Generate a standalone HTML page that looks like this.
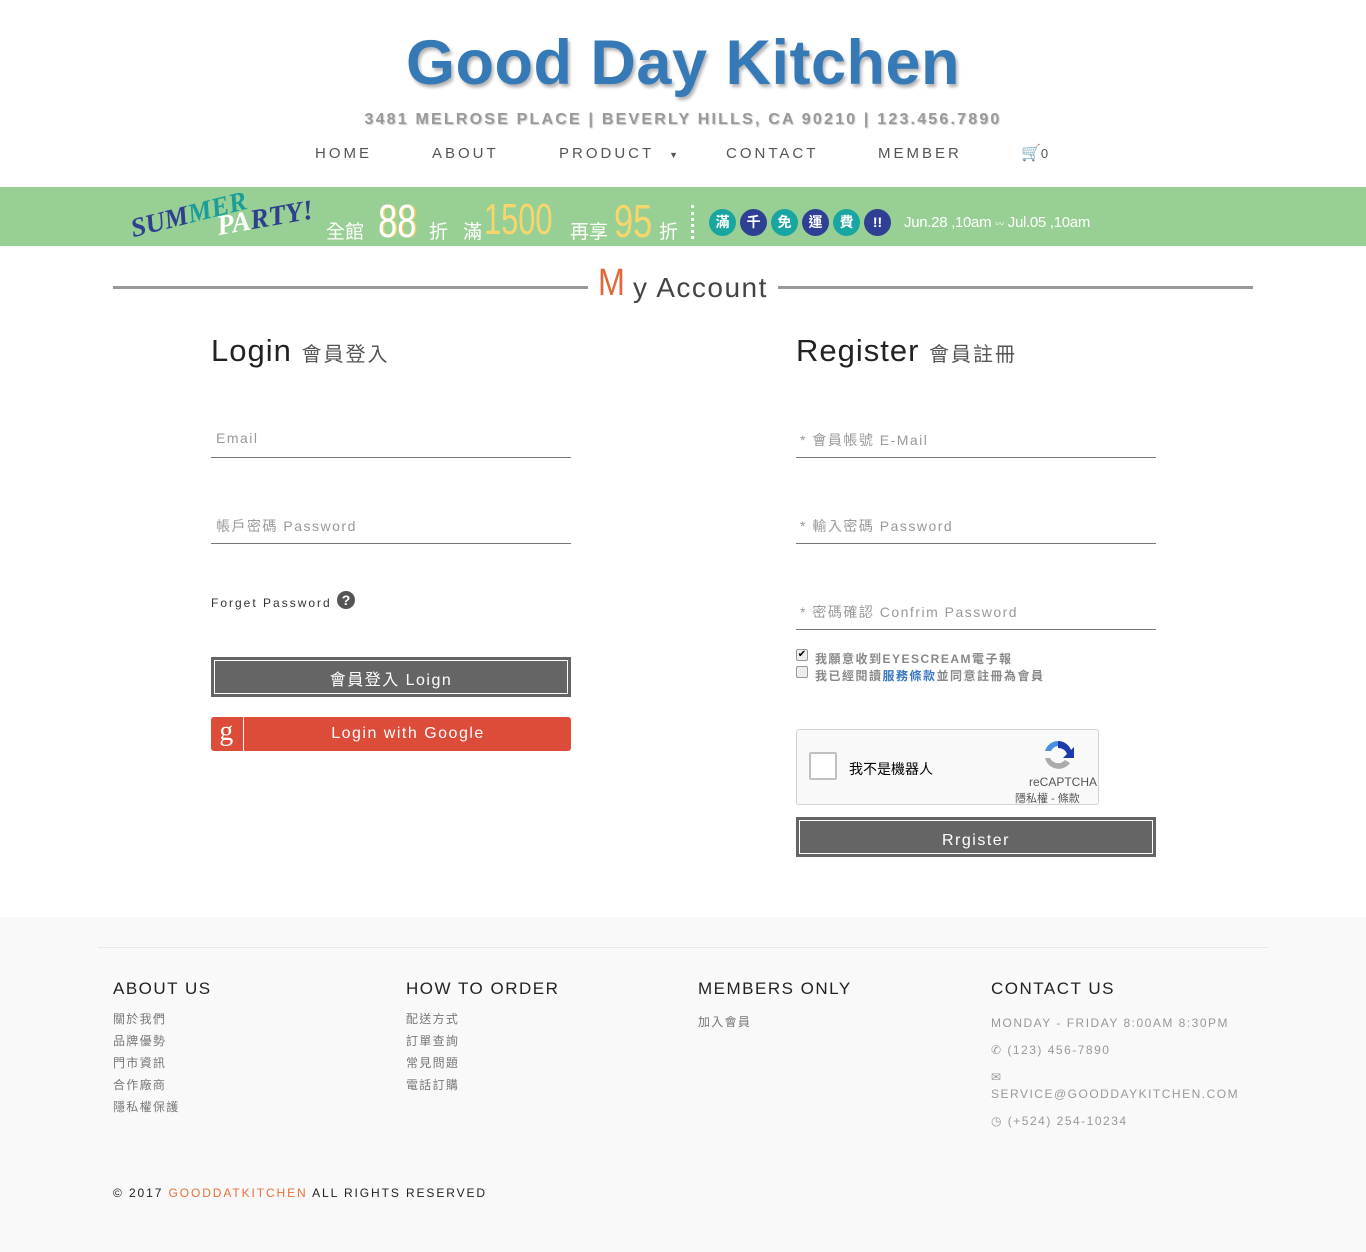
<!DOCTYPE html>
<html><head><meta charset="utf-8"><style>
*{margin:0;padding:0;box-sizing:border-box}
body{width:1366px;height:1252px;position:relative;background:#fff;font-family:"Liberation Sans","Noto Sans CJK TC",sans-serif;overflow:hidden}
.a{position:absolute;white-space:nowrap}
.title{left:0;width:1366px;top:27px;text-align:center;font-size:63px;font-weight:bold;letter-spacing:0.5px;color:#3579b6;text-shadow:2px 3px 3px rgba(0,0,0,.3)}
.addr{left:0;width:1366px;top:111px;text-align:center;font-size:16px;font-weight:bold;letter-spacing:2.2px;color:#999;text-shadow:1px 1px 1px rgba(0,0,0,.2)}
.nav{top:145px;font-size:15px;letter-spacing:3px;color:#555}
.banner{left:0;top:187px;width:1366px;height:59px;background:#98cf94;overflow:hidden}
.circ{display:inline-block;width:27px;height:27px;border-radius:50%;color:#fff;font-size:14px;font-weight:bold;text-align:center;line-height:27px;margin-right:4px}
.hr{height:3px;background:#999;top:286px}
.h2{font-size:31px;color:#222;letter-spacing:1px}
.h2 span{font-size:20px;color:#555;letter-spacing:2px}
.field{height:1px;background:#777;width:360px}
.ph{font-size:14px;color:#999;letter-spacing:1.5px}
.btn{background:#656565;color:#fff;width:360px;height:40px;border:3px solid #656565;text-align:center;font-size:16px;letter-spacing:1.5px}
.btn div{border:1px solid #fff;height:100%;line-height:40px}
.fh{font-size:17px;letter-spacing:1.5px;color:#222;top:979px}
.fl{font-size:12px;color:#777;letter-spacing:1.3px}
.fc{font-size:12px;color:#999;letter-spacing:1.5px}
.num{transform:scaleX(.75);transform-origin:left}
</style></head><body>
<div class="a title">Good Day Kitchen</div>
<div class="a addr">3481 MELROSE PLACE | BEVERLY HILLS, CA 90210 | 123.456.7890</div>
<div class="a nav" style="left:315px">HOME</div>
<div class="a nav" style="left:432px">ABOUT</div>
<div class="a nav" style="left:559px">PRODUCT <span style="font-size:9px;margin-left:8px">▼</span></div>
<div class="a nav" style="left:726px">CONTACT</div>
<div class="a nav" style="left:878px">MEMBER</div>
<div class="a" style="left:1021px;top:143px;font-size:16px;color:#555">&#128722;<span style="font-size:13px">0</span></div>

<div class="a banner">
 <div class="a" style="left:135px;top:26px;font-family:'Liberation Serif',serif;font-style:italic;font-weight:bold;font-size:27px;color:#2f3f8f;transform:rotate(-14deg);transform-origin:left bottom">SUM<span style="color:#1a9e9a">MER</span></div>
 <div class="a" style="left:220px;top:24px;font-family:'Liberation Serif',serif;font-style:italic;font-weight:bold;font-size:28px;color:#fff;transform:rotate(-10deg);transform-origin:left bottom">PA<span style="color:#2f3f8f">RTY!</span></div>
 <div class="a" style="left:326px;top:30px;font-size:19px;color:#fff">全館</div>
 <div class="a num" style="left:378px;top:7px;font-size:46px;color:#fff;text-shadow:2px 0 #f5cd60">88</div>
 <div class="a" style="left:429px;top:30px;font-size:19px;color:#fff">折</div>
 <div class="a" style="left:463px;top:30px;font-size:19px;color:#fff">滿</div>
 <div class="a num" style="left:484px;top:8px;font-size:44px;color:#f9d66c;transform:scaleX(.7)">1500</div>
 <div class="a" style="left:570px;top:30px;font-size:19px;color:#fff">再享</div>
 <div class="a num" style="left:614px;top:7px;font-size:46px;color:#f9d66c">95</div>
 <div class="a" style="left:659px;top:30px;font-size:19px;color:#fff">折</div>
 <div class="a" style="left:691px;top:18px;height:34px;border-left:3px dotted #fff"></div>
 <div class="a" style="left:709px;top:22px">
  <span class="circ" style="background:#1aa6a0">滿</span><span class="circ" style="background:#2f3f94">千</span><span class="circ" style="background:#1aa6a0">免</span><span class="circ" style="background:#2f3f94">運</span><span class="circ" style="background:#1aa6a0">費</span><span class="circ" style="background:#2f3f94">!!</span>
 </div>
 <div class="a" style="left:904px;top:27px;font-size:15px;color:#fff;letter-spacing:-.3px">Jun.28 ,10am <span style="font-size:9px">〰</span> Jul.05 ,10am</div>
</div>

<div class="a hr" style="left:113px;width:475px"></div>
<div class="a hr" style="left:778px;width:475px"></div>
<div class="a" style="left:598px;top:262px;font-size:38px;color:#e0683a;font-weight:normal;transform:scaleX(.85);transform-origin:left">M</div>
<div class="a" style="left:633px;top:272px;font-size:28px;color:#444;letter-spacing:1.5px">y Account</div>

<div class="a h2" style="left:211px;top:333px">Login <span>會員登入</span></div>
<div class="a h2" style="left:796px;top:333px">Register <span>會員註冊</span></div>

<div class="a ph" style="left:216px;top:430px">Email</div>
<div class="a field" style="left:211px;top:457px"></div>
<div class="a ph" style="left:216px;top:516px">帳戶密碼 Password</div>
<div class="a field" style="left:211px;top:543px"></div>
<div class="a" style="left:211px;top:596px;font-size:12px;letter-spacing:2px;color:#333">Forget Password</div>
<div class="a" style="left:337px;top:591px;width:18px;height:18px;border-radius:50%;background:#555;color:#fff;font-size:14px;font-weight:bold;text-align:center;line-height:18px">?</div>
<div class="a btn" style="left:211px;top:657px"><div>會員登入 Loign</div></div>
<div class="a" style="left:211px;top:717px;width:360px;height:34px;background:#dd4b39;border-radius:3px;color:#fff;font-size:16px;letter-spacing:1.5px">
 <div class="a" style="left:0;top:0;width:33px;height:34px;border-right:1px solid #fff;font-family:'Liberation Serif',serif;font-size:28px;text-align:center;line-height:30px">g</div>
 <div class="a" style="left:34px;width:326px;top:8px;text-align:center">Login with Google</div>
</div>

<div class="a ph" style="left:800px;top:430px">* 會員帳號 E-Mail</div>
<div class="a field" style="left:796px;top:457px"></div>
<div class="a ph" style="left:800px;top:516px">* 輸入密碼 Password</div>
<div class="a field" style="left:796px;top:543px"></div>
<div class="a ph" style="left:800px;top:602px">* 密碼確認 Confrim Password</div>
<div class="a field" style="left:796px;top:629px"></div>
<div class="a" style="left:796px;top:649px;width:12px;height:12px;border:1px solid #999;border-radius:2px;background:#eee;font-size:10px;line-height:10px;text-align:center">✔</div>
<div class="a" style="left:815px;top:650px;font-size:12px;font-weight:bold;color:#888;letter-spacing:1.5px">我願意收到EYESCREAM電子報</div>
<div class="a" style="left:796px;top:666px;width:12px;height:12px;border:1px solid #999;border-radius:2px;background:#eee"></div>
<div class="a" style="left:815px;top:667px;font-size:12px;font-weight:bold;color:#888;letter-spacing:1.5px">我已經閱讀<span style="color:#3a78c0">服務條款</span>並同意註冊為會員</div>

<div class="a" style="left:796px;top:729px;width:303px;height:76px;background:#f9f9f9;border:1px solid #d3d3d3;border-radius:3px">
 <div class="a" style="left:12px;top:22px;width:28px;height:28px;border:2px solid #c1c1c1;border-radius:2px;background:#fff"></div>
 <div class="a" style="left:52px;top:29px;font-size:14px;color:#000">我不是機器人</div>
 <svg class="a" style="left:244px;top:8px" width="34" height="34" viewBox="0 0 34 34"><path d="M17 3a14 14 0 0 1 13 9l3-3v11H22l4-4a9 9 0 0 0-9-6z" fill="#1c3aa9"/><path d="M17 3a14 14 0 0 0-13 10h6a9 9 0 0 1 7-5z" fill="#4a90e2"/><path d="M4 20a14 14 0 0 0 25 5l-5-3a9 9 0 0 1-15-2z" fill="#ababab"/></svg>
 <div class="a" style="left:232px;top:45px;font-size:12px;color:#555">reCAPTCHA</div>
 <div class="a" style="left:218px;top:60px;font-size:11px;color:#555">隱私權 - 條款</div>
</div>
<div class="a btn" style="left:796px;top:817px"><div>Rrgister</div></div>

<div class="a" style="left:0;top:917px;width:1366px;height:335px;background:#f9f9f9"></div>
<div class="a" style="left:98px;top:947px;width:1170px;height:1px;background:#e8e8e8"></div>
<div class="a fh" style="left:113px">ABOUT US</div>
<div class="a fh" style="left:406px">HOW TO ORDER</div>
<div class="a fh" style="left:698px">MEMBERS ONLY</div>
<div class="a fh" style="left:991px">CONTACT US</div>
<div class="a fl" style="left:113px;top:1008px;line-height:22px;white-space:normal">關於我們<br>品牌優勢<br>門市資訊<br>合作廠商<br>隱私權保護</div>
<div class="a fl" style="left:406px;top:1008px;line-height:22px;white-space:normal">配送方式<br>訂單查詢<br>常見問題<br>電話訂購</div>
<div class="a fl" style="left:698px;top:1013px">加入會員</div>
<div class="a fc" style="left:991px;top:1016px">MONDAY - FRIDAY 8:00AM 8:30PM</div>
<div class="a fc" style="left:991px;top:1043px">&#9990; (123) 456-7890</div>
<div class="a fc" style="left:991px;top:1070px">✉</div>
<div class="a fc" style="left:991px;top:1087px">SERVICE@GOODDAYKITCHEN.COM</div>
<div class="a fc" style="left:991px;top:1114px">◷ (+524) 254-10234</div>
<div class="a" style="left:113px;top:1186px;font-size:12px;letter-spacing:1.9px;color:#222">© 2017 <span style="color:#e8703a">GOODDATKITCHEN</span> ALL RIGHTS RESERVED</div>
</body></html>
